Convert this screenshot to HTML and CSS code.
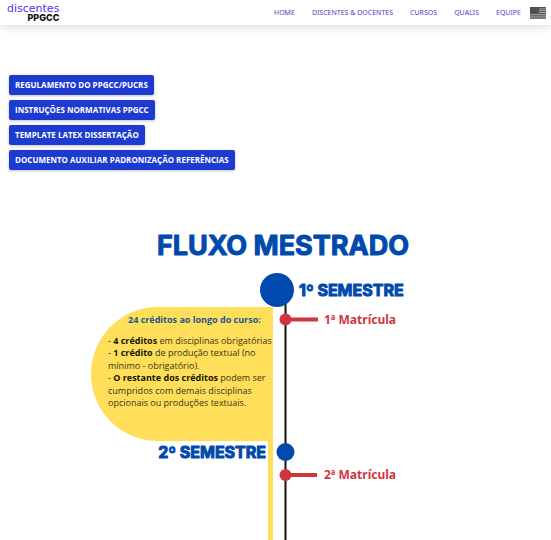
FILE: index.html
```html
<!DOCTYPE html>
<html lang="pt-BR">
<head>
<meta charset="utf-8">
<meta name="viewport" content="width=device-width, initial-scale=1">
<title>Discentes PPGCC</title>
<link rel="stylesheet" href="styles.css">
</head>
<body>
<header class="topbar">
  <a class="logo" href="#"><span class="logo-top">discentes</span><span class="logo-bottom">PPGCC</span></a>
  <nav class="nav">
    <a href="#">HOME</a>
    <a href="#">DISCENTES &amp; DOCENTES</a>
    <a href="#">CURSOS</a>
    <a href="#">QUALIS</a>
    <a href="#">EQUIPE</a>
  </nav>
  <a class="flag" href="#" aria-label="English">
    <svg width="16" height="12" viewBox="0 0 16 12" aria-hidden="true">
      <rect width="16" height="12" fill="#555"/>
      <path d="M0 7.4h16M0 9.2h16M0 11h16M9 1.9h7M9 3.7h7M9 5.5h7" stroke="#aaa" stroke-width=".9"/>
      <rect width="9" height="6" fill="#4a4a4a"/>
      <path d="M1 1.5h7M1 3h7M1 4.5h7" stroke="#6c6c6c" stroke-width=".6" stroke-dasharray=".8 .8"/>
    </svg>
  </a>
</header>
<main>
  <div class="documents">
    <a class="btn" href="#">REGULAMENTO DO PPGCC/PUCRS</a>
    <a class="btn" href="#">INSTRUÇÕES NORMATIVAS PPGCC</a>
    <a class="btn" href="#">TEMPLATE LATEX DISSERTAÇÃO</a>
    <a class="btn" href="#">DOCUMENTO AUXILIAR PADRONIZAÇÃO REFERÊNCIAS</a>
  </div>
  <svg class="flow" viewBox="0 0 551 320" role="img" aria-label="Fluxo Mestrado">
    <text class="title" x="283" y="35" text-anchor="middle">FLUXO MESTRADO</text>
    <path class="yellow" d="M273 87H158a67 67 0 0 0 0 134h110v99h5z"/>
    <path class="line" d="M285.5 75V320"/>
    <circle class="blue" cx="277" cy="70" r="17"/>
    <text class="semester" x="299" y="76">1º SEMESTRE</text>
    <path class="branch" d="M286 99.5h32M286 255h31"/>
    <circle class="red" cx="285.5" cy="99.5" r="6"/>
    <text class="enrol" x="324" y="104">1ª Matrícula</text>
    <text class="credits" x="128" y="103">24 créditos ao longo do curso:</text>
    <text class="body">
      <tspan x="108" y="124">- <tspan class="strong">4 créditos</tspan> em disciplinas obrigatórias</tspan>
      <tspan x="108" y="136">- <tspan class="strong">1 crédito</tspan> de produção textual (no</tspan>
      <tspan x="108" y="149">mínimo - obrigatório).</tspan>
      <tspan x="108" y="161">- <tspan class="strong">O restante dos créditos</tspan> podem ser</tspan>
      <tspan x="108" y="174">cumpridos com demais disciplinas</tspan>
      <tspan x="108" y="186">opcionais ou produções textuais.</tspan>
    </text>
    <text class="semester" x="266" y="238" text-anchor="end">2º SEMESTRE</text>
    <circle class="blue" cx="285.5" cy="232" r="9"/>
    <circle class="red" cx="285.5" cy="255" r="6"/>
    <text class="enrol" x="324" y="259">2ª Matrícula</text>
  </svg>
</main>
</body>
</html>
```
FILE: styles.css
```css
* { box-sizing: border-box; }
body {
  margin: 0;
  background: #fff;
  font-family: "Open Sans", "Noto Sans", sans-serif;
}
a { text-decoration: none; }
.topbar {
  display: flex;
  align-items: center;
  height: 25px;
  padding: 0 5px 0 7px;
  background: #fff;
  box-shadow: 0 2px 8px rgba(0, 0, 0, 0.15);
}
.logo {
  display: flex;
  flex-direction: column;
  align-items: flex-end;
}
.logo-top {
  font-family: "DejaVu Sans", sans-serif;
  font-size: 11px;
  line-height: 9px;
  color: #5a2fee;
}
.logo-bottom {
  font-family: Inter, sans-serif;
  font-size: 9px;
  font-weight: 800;
  line-height: 9px;
  color: #111;
}
.nav {
  display: flex;
  gap: 17px;
  margin-left: auto;
  font-family: "Noto Sans", sans-serif;
}
.nav a { font-size: 7px; line-height: 12px; color: #4a3fd0; }
.flag { display: flex; margin-left: 9px; }
.documents {
  display: flex;
  flex-direction: column;
  align-items: flex-start;
  gap: 5px;
  padding: 50px 9px;
}
.btn {
  padding: 0 6px;
  border-radius: 2px;
  background: #1d3bd1;
  box-shadow: 0 1px 3px rgba(0, 0, 0, 0.25);
  color: #fff;
  font-size: 8px;
  font-weight: 700;
  line-height: 20px;
}
.flow { display: block; width: 100%; }
.title, .semester {
  font-family: Inter, sans-serif;
  font-weight: 700;
  fill: #004aad;
  stroke: #004aad;
  stroke-linejoin: round;
}
.title { font-size: 27px; }
.semester { font-size: 16px; }
.enrol { font-size: 12px; font-weight: 700; fill: #d1353f; font-family: "Noto Sans", sans-serif; }
.credits { font-size: 9px; font-weight: 700; fill: #21588f; }
.body { font-size: 9px; fill: #3b3518; }
.strong { font-weight: 700; fill: #171509; }
.yellow { fill: #ffde59; }
.blue { fill: #004aad; }
.red { fill: #d1353f; }
.line { stroke: #111; stroke-width: 2; }
.branch { stroke: #d1353f; stroke-width: 4; }
```
